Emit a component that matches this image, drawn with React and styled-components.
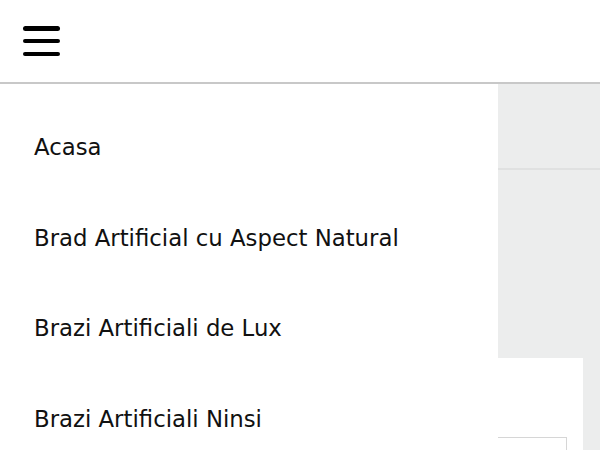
import styled, { createGlobalStyle } from "styled-components";

const Global = createGlobalStyle`
  html, body {
    margin: 0;
    padding: 0;
    background: #ffffff;
    font-family: "DejaVu Sans", Verdana, sans-serif;
  }
  * { box-sizing: border-box; }
`;

const Page = styled.div`
  width: 600px;
  height: 450px;
  overflow: hidden;
  position: relative;
  background: #ffffff;
`;

const Header = styled.header`
  height: 84px;
  display: flex;
  align-items: center;
  padding-left: 23px;
  border-bottom: 2px solid #c8c8c8;
`;

const Burger = styled.button`
  width: 37px;
  height: 30px;
  padding: 0;
  border: 0;
  background: transparent;
  display: flex;
  flex-direction: column;
  justify-content: space-between;
  cursor: pointer;
`;

const Bar = styled.span`
  display: block;
  height: 4.5px;
  border-radius: 3px;
  background: #000;
`;

const Content = styled.div`
  display: flex;
  justify-content: flex-end;
  height: 366px;
  background: #ffffff;
`;

const Side = styled.div`
  width: 102px;
  display: flex;
  flex-direction: column;
  background: #eceded;
`;

const TopBlock = styled.div`
  flex-shrink: 0;
  height: 86px;
  border-bottom: 2px solid #e0e1e1;
`;

const Card = styled.div`
  flex-shrink: 0;
  margin-top: 188px;
  margin-right: 17px;
  height: 120px;
  background: #ffffff;
  padding-top: 79px;
`;

const Field = styled.div`
  width: 69px;
  height: 20px;
  border-top: 1px solid #d6d6d6;
  border-right: 1px solid #d6d6d6;
`;

const Menu = styled.nav`
  position: absolute;
  left: 0;
  top: 84px;
  width: 498px;
  bottom: 0;
  background: #ffffff;
  padding-top: 18px;
`;

const Item = styled.a`
  display: flex;
  align-items: center;
  height: 90.5px;
  padding-left: 34px;
  font-size: 22.8px;
  color: #111;
  text-decoration: none;
`;

const items = [
  "Acasa",
  "Brad Artificial cu Aspect Natural",
  "Brazi Artificiali de Lux",
  "Brazi Artificiali Ninsi",
];

export default function App() {
  return (
    <Page>
      <Global />
      <Header>
        <Burger aria-label="Meniu">
          <Bar />
          <Bar />
          <Bar />
        </Burger>
      </Header>
      <Content>
        <Side>
          <TopBlock />
          <Card>
            <Field />
          </Card>
        </Side>
      </Content>
      <Menu>
        {items.map((t) => (
          <Item key={t} href="#">
            {t}
          </Item>
        ))}
      </Menu>
    </Page>
  );
}
